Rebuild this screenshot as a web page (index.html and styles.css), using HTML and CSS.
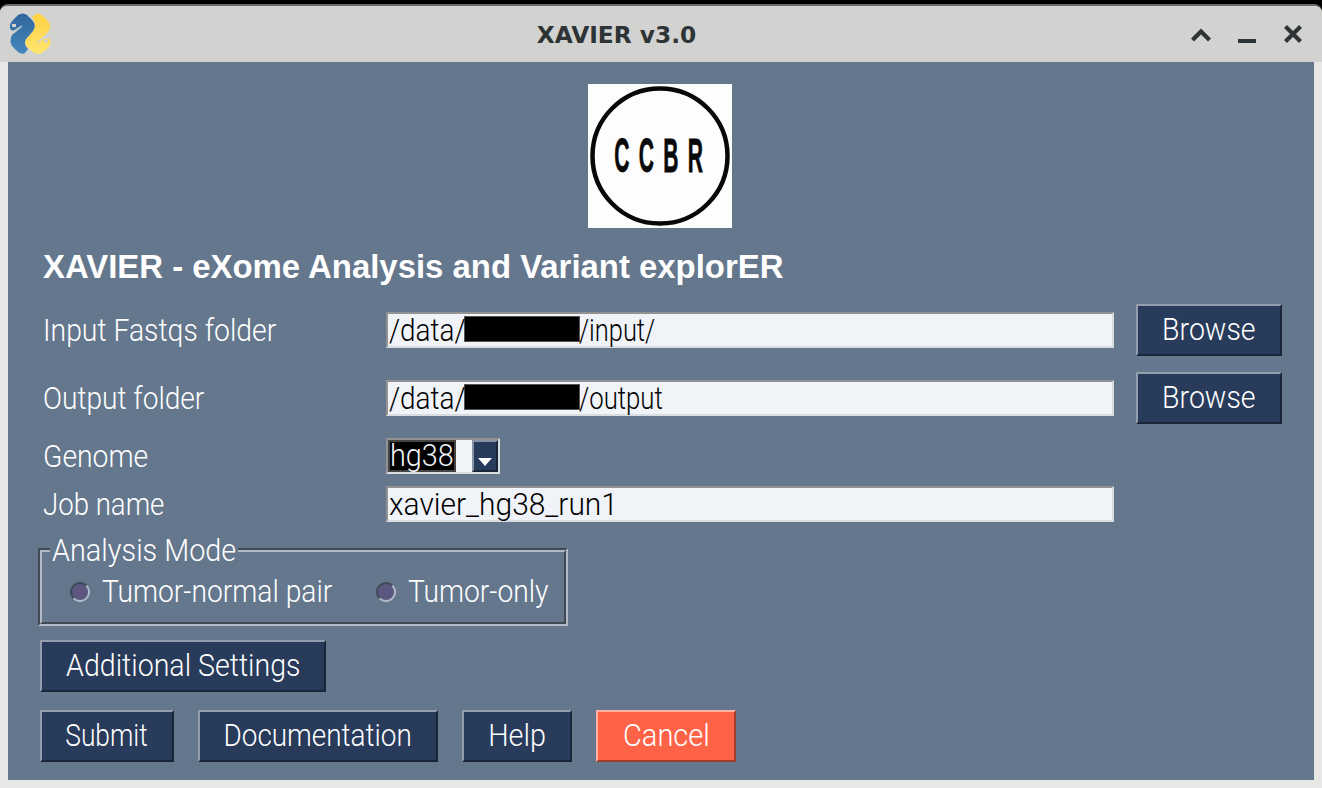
FILE: index.html
```html
<!DOCTYPE html>
<html lang="en">
<head>
<meta charset="utf-8">
<title>XAVIER v3.0</title>
<link rel="stylesheet" href="styles.css">
</head>
<body>
<div class="window">
  <header class="titlebar">
    <svg class="app-icon" viewBox="0 0 42 42" aria-hidden="true">
      <defs>
        <linearGradient id="blue" x1="0" y1="0" x2="0" y2="1"><stop offset="0" stop-color="#30669a"/><stop offset="1" stop-color="#4487bd"/></linearGradient>
        <linearGradient id="gold" x1="0" y1="0" x2="0" y2="1"><stop offset="0" stop-color="#ffd140"/><stop offset="1" stop-color="#ffe56f"/></linearGradient>
      </defs>
      <path fill="url(#gold)" d="M23 4 28 .5Q31 0 34 3L39 8Q43 13 39 19L33 25 28 30 35 26 41 26Q43 30 39 35L33 40Q29 42 25 40L18 34Q15 30 17 26L25 17Q28 11 23 4Z"/>
      <path fill="url(#blue)" d="M9 2Q14-1 18 2L23 7Q28 12 24 18L17 26Q14 31 19 36L16 40Q13 42 9 39L3 33Q0 28 3 22L13 14 6 18 2 17Q-1 12 4 7Z"/>
      <path fill="#d2d2d0" d="M3 11h4v3H3zM35 27h4v2.500h-4z"/>
      <path fill="none" stroke="#d2d2d0" stroke-width="1.300" d="M5 18 13 13M28 30l8-6"/>
    </svg>
    <h1 class="window-title">XAVIER v3.0</h1>
    <svg class="controls" viewBox="0 0 112 20" aria-hidden="true">
      <g fill="none" stroke="#2e3436" stroke-width="4.200">
        <path d="M1.500 15 10 6.500 18.500 15"/><path d="M47 16H65"/><path d="M94.500 1.500 109.500 16.500M109.500 1.500 94.500 16.500"/>
      </g>
    </svg>
  </header>
  <main class="client">
    <svg class="logo" viewBox="0 0 144 144" role="img" aria-label="CCBR">
      <rect width="144" height="144" fill="#fdfdfd"/>
      <circle cx="72" cy="72" r="67.500" fill="none" stroke="#080808" stroke-width="4.500"/>
      <g class="logo-text" transform="scale(.43 1)">
        <text x="61" y="88">C</text><text x="118" y="88">C</text><text x="175" y="88">B</text><text x="232" y="88">R</text>
      </g>
    </svg>
    <h2 class="heading"><span class="fit">XAVIER - eXome Analysis and Variant explorER</span></h2>
    <div class="form">
      <div class="row tall"><label class="label"><span class="fit input-label">Input Fastqs folder</span></label><div class="entry"><span class="root"><span class="fit">/data/</span></span><i class="redacted"></i><span class="fit input-path">/input/</span></div><button class="btn browse"><span class="fit">Browse</span></button></div>
      <div class="row tall second"><label class="label"><span class="fit output-label">Output folder</span></label><div class="entry"><span class="root"><span class="fit">/data/</span></span><i class="redacted"></i><span class="fit output-path">/output</span></div><button class="btn browse"><span class="fit">Browse</span></button></div>
      <div class="row genome"><label class="label"><span class="fit">Genome</span></label><div class="entry combo"><span class="selected"><span class="fit">hg38</span></span><span class="arrow"></span></div></div>
      <div class="row job"><label class="label"><span class="fit job-label">Job name</span></label><div class="entry"><span class="fit job-value">xavier_hg38_run1</span></div></div>
    </div>
    <section class="frame">
      <span class="legend"><span class="fit">Analysis Mode</span></span>
      <label class="option pair"><svg class="radio" viewBox="0 0 20 20"><circle cx="10" cy="10" r="9" fill="#5b5780"/><path d="M3.600 16.400A9 9 0 0 1 16.400 3.600" fill="none" stroke="#414b57" stroke-width="2"/><path d="M3.600 16.400A9 9 0 0 0 16.400 3.600" fill="none" stroke="#b0bac7" stroke-width="2"/></svg><span class="fit">Tumor-normal pair</span></label>
      <label class="option"><svg class="radio" viewBox="0 0 20 20"><circle cx="10" cy="10" r="9" fill="#5b5780"/><path d="M3.600 16.400A9 9 0 0 1 16.400 3.600" fill="none" stroke="#414b57" stroke-width="2"/><path d="M3.600 16.400A9 9 0 0 0 16.400 3.600" fill="none" stroke="#b0bac7" stroke-width="2"/></svg><span class="fit">Tumor-only</span></label>
    </section>
    <button class="btn settings"><span class="fit">Additional Settings</span></button>
    <div class="actions">
      <button class="btn submit"><span class="fit">Submit</span></button><button class="btn docs"><span class="fit">Documentation</span></button><button class="btn help"><span class="fit">Help</span></button><button class="btn cancel"><span class="fit">Cancel</span></button>
    </div>
  </main>
</div>
</body>
</html>
```
FILE: styles.css
```css
* { box-sizing: border-box; }
body { margin: 0; background: #000; }
.window {
  width: 1322px; height: 784px; margin-top: 4px; overflow: hidden;
  border-top: 2px solid #6b6b6b; border-radius: 8px 8px 0 0;
  background: #e7e7e5; display: flex; flex-direction: column;
  font: 300 31px/36px Roboto, "Liberation Sans", sans-serif; color: #fff;
}
.titlebar {
  height: 56px; flex: none; background: #d2d2d0; display: flex;
  align-items: center; justify-content: space-between; padding: 2px 19px 0 9px;
}
.app-icon { width: 42px; height: 42px; margin-top: -3px; }
.window-title { margin: 0 76px 0 67px; font: bold 23.300px/30px "DejaVu Sans", sans-serif; color: #2e3436; white-space: nowrap; }
.controls { width: 112px; height: 20px; margin-top: -1px; }
.client { width: 1306px; height: 718px; margin: 0 8px; background: #64778d; padding: 22px 32px 0; display: flex; flex-direction: column; align-items: flex-start; }

/* Condensed lettering: --fit is the horizontal squeeze of each string. */
.fit { display: inline-block; white-space: pre; transform: scaleX(var(--fit, .914)); transform-origin: left center; }
.btn .fit { transform-origin: center; }

.logo { width: 144px; height: 144px; margin-left: 548px; flex: none; }
.logo-text { font: bold 49px "Liberation Sans", sans-serif; fill: #080808; stroke: #080808; stroke-width: .8px; }
.heading { margin: 18px 0 0 3px; height: 58px; font: bold 33.500px/42px "Liberation Sans", sans-serif; --fit: .982; }
.form { display: flex; flex-direction: column; }
.row { display: grid; grid-template: 100% / 344px 728px 22px 146px; align-items: center; height: 36px; margin-left: 2px; }
.row.tall { height: 52px; }
.row .browse { grid-column: 4; --fit: .92; }
.second { margin-top: 16px; }
.genome { margin-top: 14px; }
.job { margin-top: 12px; }
.label { padding: 0 0 0 1px; height: 36px; line-height: 38px; }
.input-label { --fit: .914; }
.output-label { --fit: .906; }
.job-label { --fit: .89; }
.entry { height: 36px; border: 2px solid; border-color: #929292 #d9dce0 #d9dce0 #929292; background: #f0f3f7; color: #000; display: flex; align-items: center; padding: 1px 0 0 1px; line-height: 32px; }
.root { width: 75px; --fit: .9; }
.redacted { width: 116px; height: 26px; margin: -4px -1px 0 0; background: #000; border: 1px solid #555; }
.input-path { --fit: .82; }
.output-path { --fit: .83; }
.job-value { --fit: .966; }
.combo { width: 114px; padding: 0; }
.selected { width: 68px; height: 32px; background: #000; border: 2px solid #444; color: #f0f3f7; line-height: 28px; --fit: .93; }
.arrow { width: 26px; height: 32px; margin-left: auto; border: 2px solid; border-color: #8792a6 #1a2538 #1a2538 #8792a6; background: #283b5b; display: flex; justify-content: center; padding-top: 16px; }
.arrow::before { content: ""; width: 0; height: 0; border: 7px solid transparent; border-top: 8px solid #fff; border-bottom: 0; }
.btn { height: 52px; margin: 0; padding: 0; border: 2px solid; border-color: #949dad #1a2538 #1a2538 #949dad; background: #283b5b; color: #fff; font: inherit; white-space: nowrap; flex: none; }
.frame { position: relative; width: 530px; height: 78px; margin: 26px 0 0 -2px; border: 2px solid; border-color: #414953 #b1bac6 #b1bac6 #414953; display: flex; flex: none; padding: 22px 0 0 30px; }
.frame::before { content: ""; position: absolute; inset: 0; border: 2px solid; border-color: #b1bac6 #414953 #414953 #b1bac6; }
.legend { position: absolute; left: 10px; top: -17px; width: 188px; height: 32px; padding-left: 2px; line-height: 35px; background: #64778d; --fit: .93; }
.option { display: flex; align-items: center; height: 40px; gap: 12px; --fit: .91; }
.pair { width: 306px; }
.radio { width: 20px; height: 20px; flex: none; }
.settings { width: 286px; margin-top: 14px; --fit: .921; }
.actions { display: flex; gap: 24px; margin-top: 18px; }
.submit { width: 134px; --fit: .85; }
.docs { width: 240px; --fit: .9; }
.help { width: 110px; --fit: .93; }
.cancel { width: 140px; --fit: .935; background: #ff6347; border-color: #ffb1a3 #9f3e2d #9f3e2d #ffb1a3; }
```
